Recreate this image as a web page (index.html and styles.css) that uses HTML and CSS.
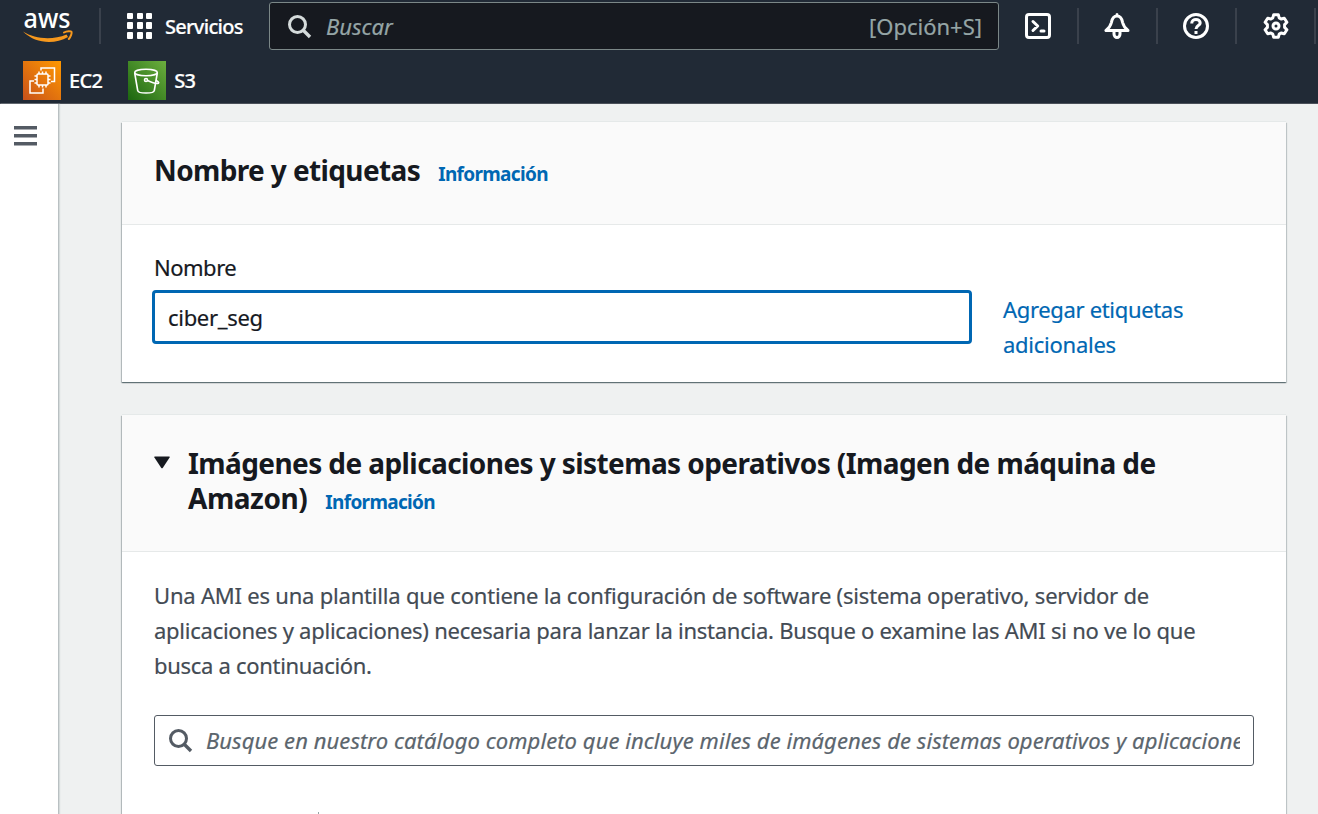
FILE: index.html
```html
<!DOCTYPE html>
<html lang="es">
<head>
<meta charset="utf-8">
<title>Lanzar una instancia | EC2</title>
<link rel="stylesheet" href="styles.css">
</head>
<body>
<header class="topbar">
  <div class="nav-row">
    <div class="logo">
      <svg class="logo-mark" viewBox="0 0 52 36" width="52" height="36">
        <text class="logo-text" x="1.500" y="18.500" textLength="47" lengthAdjust="spacingAndGlyphs">aws</text>
        <path d="M1 22.500C13 30 30 31.500 44.500 25.500L46 28C32 36 13 34.500 1 22.500z" fill="#f7981d"/>
        <path d="M42 23.500C45 21.800 49 22 49.500 22.800C50 24 49 27.500 46.800 30" fill="none" stroke="#f7981d" stroke-width="2" stroke-linecap="round"/>
      </svg>
    </div>
    <span class="sep sep-logo"></span>
    <div class="services">
      <svg width="26" height="26" viewBox="0 0 26 26" fill="#fff">
        <rect x="0" y="0" width="6" height="6" rx="1"/><rect x="10" y="0" width="6" height="6" rx="1"/><rect x="19" y="0" width="6" height="6" rx="1"/>
        <rect x="0" y="9" width="6" height="7" rx="1"/><rect x="10" y="9" width="6" height="7" rx="1"/><rect x="19" y="9" width="6" height="7" rx="1"/>
        <rect x="0" y="19" width="6" height="7" rx="1"/><rect x="10" y="19" width="6" height="7" rx="1"/><rect x="19" y="19" width="6" height="7" rx="1"/>
      </svg>
      <span class="t-services">Servicios</span>
    </div>
    <div class="search">
      <svg class="lens" width="24" height="24" viewBox="0 0 24 24" fill="none" stroke="#d5dbdb" stroke-width="3"><circle cx="9.500" cy="9.500" r="8"/><path d="M15 15l7 7" stroke-width="3.400"/></svg>
      <span class="search-hint">Buscar</span>
      <span class="search-key">[Opción+S]</span>
    </div>
    <div class="tools">
      <span class="tool"><svg width="26" height="26" viewBox="0 0 26 26" fill="none" stroke="#fff" stroke-width="3" stroke-linejoin="round" stroke-linecap="round"><rect x="1.500" y="1.500" width="23" height="23" rx="2.500"/><path d="M8 8.500l4.700 4.500L8 17.500M16 18h3"/></svg></span>
      <span class="sep"></span>
      <span class="tool"><svg width="26" height="26" viewBox="0 0 26 26" fill="none" stroke="#fff" stroke-width="3" stroke-linejoin="round" stroke-linecap="round"><path d="M13 1.500v1M2 17.500h22c-3.300-2.600-4.600-4.800-5.400-8C17.900 5.500 16.200 3 13 3S8.100 5.500 7.400 9.500C6.600 12.700 5.300 14.900 2 17.500z"/><path d="M10 18v3a3 3.400 0 0 0 6 0v-3"/></svg></span>
      <span class="sep"></span>
      <span class="tool"><svg width="26" height="26" viewBox="0 0 26 26" fill="none" stroke="#fff" stroke-width="3"><circle cx="13" cy="13" r="11.500"/><path d="M8.800 10.500V10a4.200 3.600 0 0 1 8.400 0c0 2.600-4.200 2.600-4.200 6M13 18v3"/></svg></span>
      <span class="sep"></span>
      <span class="tool"><svg width="26" height="26" viewBox="0 0 26 26" fill="none" stroke="#fff" stroke-width="3" stroke-linejoin="round"><path d="M10.700 1.700h4.600l.9 3.200 1.900 1.100 3.200-.8 2.600 4-2.300 2.400v2.800l2.300 2.400-2.600 4-3.200-.8-1.900 1.100-.9 3.200h-4.600l-.9-3.200L7.900 20l-3.200.8-2.600-4 2.300-2.400v-2.800L2.100 9.200l2.600-4 3.200.8 1.900-1.100z"/><circle cx="13" cy="13" r="3"/></svg></span>
      <span class="sep"></span>
    </div>
  </div>
  <div class="favorites">
    <div class="fav">
      <svg width="38" height="39" viewBox="0 0 38 39">
        <defs><linearGradient id="ec2" x1="0" y1="1" x2="1" y2="0"><stop offset="0" stop-color="#c8511b"/><stop offset="1" stop-color="#ff9900"/></linearGradient></defs>
        <rect width="38" height="39" fill="url(#ec2)"/>
        <g fill="none" stroke="#fff" stroke-width="1.500">
          <rect x="14" y="13" width="11" height="11" rx="1"/>
          <path d="M16 13v-2.500M19.500 13v-2.500M23 13v-2.500M16 24v2.500M19.500 24v2.500M23 24v2.500M14 15h-2.500M14 18.500h-2.500M14 22h-2.500M25 15h2.500M25 18.500h2.500M25 22h2.500"/>
          <path d="M18 9.500V7h13.500v13.500H28M11 20H7v12h13v-4.500"/>
        </g>
      </svg>
      <span class="t-ec2">EC2</span>
    </div>
    <div class="fav">
      <svg width="38" height="39" viewBox="0 0 38 39">
        <defs><linearGradient id="s3" x1="0" y1="1" x2="1" y2="0"><stop offset="0" stop-color="#1b660f"/><stop offset="1" stop-color="#6cae3e"/></linearGradient></defs>
        <rect width="38" height="39" fill="url(#s3)"/>
        <g fill="none" stroke="#fff" stroke-width="1.600">
          <ellipse cx="18" cy="11.500" rx="11.300" ry="3.200"/>
          <path d="M6.700 12l3 17.500c.5 3.400 16.100 3.400 16.600 0L29.300 12"/>
          <circle cx="18" cy="19" r="1.500"/><path d="M19.500 19.500c4 1.900 9 3.400 11 2.800.8-.8-.8-2-2.600-3"/>
        </g>
      </svg>
      <span class="t-s3">S3</span>
    </div>
  </div>
</header>
<div class="page">
  <aside class="rail">
    <svg width="23" height="20" viewBox="0 0 23 20" fill="#545b64"><rect width="23" height="3.500"/><rect y="8" width="23" height="3.500"/><rect y="16" width="23" height="3.500"/></svg>
  </aside>
  <main class="content">
    <section class="card card-name">
      <div class="card-head">
        <h2 class="t-name-head">Nombre y etiquetas</h2><a class="info">Información</a>
      </div>
      <div class="name-body">
        <div class="field">
          <label class="t-label">Nombre</label>
          <div class="input"><span class="t-value">ciber_seg</span></div>
        </div>
        <a class="add-tags"><span class="t-add1">Agregar etiquetas</span><br><span class="t-add2">adicionales</span></a>
      </div>
    </section>
    <section class="card card-ami">
      <div class="card-head ami-head">
        <svg class="caret" width="16" height="13" viewBox="0 0 16 13"><path d="M.8.500h14.400q.8.200.4 1L8.700 12q-.7.700-1.400 0L.4 1.500Q0 .7.800.500z" fill="#16191f"/></svg>
        <h2><span class="t-ami1">Imágenes de aplicaciones y sistemas operativos (Imagen de máquina de</span><br><span class="t-ami2">Amazon)</span><a class="info">Información</a></h2>
      </div>
      <div class="ami-body">
        <p class="description"><span class="t-d1">Una AMI es una plantilla que contiene la configuración de software (sistema operativo, servidor de</span><br><span class="t-d2">aplicaciones y aplicaciones) necesaria para lanzar la instancia. Busque o examine las AMI si no ve lo que</span><br><span class="t-d3">busca a continuación.</span></p>
        <div class="ami-search">
          <svg width="24" height="24" viewBox="0 0 24 24" fill="none" stroke="#545b64" stroke-width="3"><circle cx="9.500" cy="9.500" r="8"/><path d="M15 15l7 7" stroke-width="3.400"/></svg>
          <div class="ami-clip"><span class="t-ph">Busque en nuestro catálogo completo que incluye miles de imágenes de sistemas operativos y aplicaciones</span></div>
        </div>
        <span class="tab-divider"></span>
      </div>
    </section>
  </main>
</div>
</body>
</html>
```
FILE: styles.css
```css
* { box-sizing: border-box; }
body {
  margin: 0;
  height: 814px;
  overflow: hidden;
  background: #eff1f1;
  color: #16191f;
  font: 22px/35px "Noto Sans", "Open Sans", sans-serif;
  white-space: nowrap;
  -webkit-text-stroke: .2px currentColor;
}
svg { display: block; flex: none; }
.topbar {
  height: 104px;
  background: #212a36;
  border-bottom: 1px solid #4a5059;
  color: #fff;
}
.nav-row { display: flex; align-items: center; height: 52px; padding-left: 22px; }
.logo { width: 52px; padding-top: 1px; }
.logo-text { font: 500 27px "Noto Sans", sans-serif; fill: #fff; -webkit-text-stroke: 0; }
.sep { width: 2px; height: 36px; background: #3a414c; flex: none; }
.sep-logo { margin-left: 25px; }
.services { display: flex; flex: none; align-items: center; gap: 12px; width: 142px; margin-left: 26px; font-size: 20px; font-weight: 500; }
.t-services { letter-spacing: -.7px; }
.search {
  display: flex;
  flex: none;
  align-items: center;
  width: 730px;
  height: 48px;
  padding: 0 16px 0 18px;
  border: 1px solid #7b8787;
  border-radius: 3px;
  background: #16191f;
  color: #95a5a6;
}
.lens { margin-top: 2px; }
.search-hint { margin-left: 14px; font-style: italic; }
.search-key { margin-left: auto; }
.tools { display: flex; flex: none; align-items: center; margin-left: 26px; gap: 25.600px; }
.tool { width: 26px; flex: none; }
.favorites { display: flex; gap: 26px; padding: 9px 0 0 23px; font-size: 20px; font-weight: 500; }
.fav { display: flex; align-items: center; gap: 8px; }
.t-ec2, .t-s3 { letter-spacing: -.7px; }
.page { display: flex; height: 710px; }
.rail { width: 59px; padding: 22px 0 0 14px; background: #fff; border-right: 1px solid #b9c0c2; box-shadow: 1px 0 1px #d5dbdb; }
.content { padding: 18px 0 0 63px; }
.card {
  width: 1164px;
  background: #fff;
  box-shadow: 0 1px 1px 0 rgba(0, 28, 36, .4), 1px 1px 1px 0 rgba(0, 28, 36, .15), -1px 1px 1px 0 rgba(0, 28, 36, .2), 0 -1px 0 0 #e5e9e9;
}
.card-name { height: 260px; }
.card-head { display: flex; height: 103px; padding: 31px 32px 0; background: #fafafa; border-bottom: 1px solid #e6e9e9; -webkit-text-stroke: 0; }
h2 { margin: 0; font-size: 28px; line-height: 35px; font-weight: 700; }
.t-name-head { letter-spacing: -.62px; }
.t-ami1 { letter-spacing: -.585px; }
.t-ami2 { letter-spacing: -.45px; }
.info { margin-left: 18px; color: #0067b3; font-size: 19px; font-weight: 700; letter-spacing: -.67px; }
.card-head > .info { padding-top: 4px; }
.name-body { display: flex; padding: 25px 32px; gap: 31px; }
.field { width: 818px; }
.field label { display: block; line-height: 35px; }
.t-label { letter-spacing: -.5px; }
.t-value { letter-spacing: -.3px; }
.t-add1 { letter-spacing: -.33px; }
.t-add2 { letter-spacing: -.25px; }
.input {
  width: 820px;
  height: 54px;
  margin: 5px 0 0 -2px;
  padding: 7px 13px;
  border: 3px solid #0067b3;
  border-radius: 4px;
}
.add-tags { padding-top: 42px; color: #0067b3; }
.card-ami { height: 399px; margin-top: 33px; }
.ami-head { height: 137px; }
.caret { margin: 10px 18px 0 0; }
.ami-body { padding: 26px 32px 0; }
.description { margin: 0; color: #434b54; }
.t-d1 { letter-spacing: -.205px; }
.t-d2 { letter-spacing: -.25px; }
.t-d3 { letter-spacing: -.3px; }
.t-ph { letter-spacing: .07px; }
.ami-search {
  display: flex;
  align-items: center;
  width: 1100px;
  height: 51px;
  margin-top: 32px;
  padding: 0 13px 0 14px;
  border: 1px solid #545b64;
  border-radius: 3px;
  color: #5b656d;
}
.ami-clip { margin-left: 13px; flex: 1; min-width: 0; overflow: hidden; font-style: italic; }
.tab-divider { display: block; width: 1px; height: 2px; margin: 46px 0 0 164px; background: #95a5a6; }
```
